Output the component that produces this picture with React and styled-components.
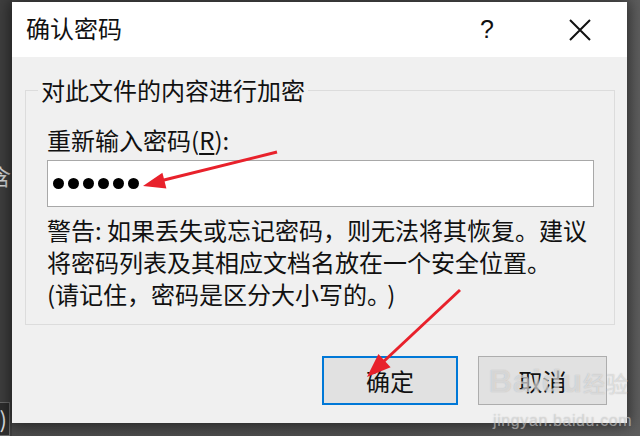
import React from 'react';
import styled, { createGlobalStyle } from 'styled-components';

const GlobalStyle = createGlobalStyle`
  html, body {
    margin: 0;
    padding: 0;
    background: #4e4e4e;
    overflow: hidden;
  }
  * { box-sizing: border-box; }
`;

const UI_FONT = `"Noto Sans CJK SC", "Noto Sans", "Liberation Sans", sans-serif`;

const Desktop = styled.div`
  position: relative;
  width: 640px;
  height: 436px;
  display: flex;
  align-items: flex-start;
  background: linear-gradient(90deg, #4a4a4a 0%, #4f4f4f 60%, #5e5e5e 100%);
  font-family: ${UI_FONT};
  overflow: hidden;
`;

const LeftStrip = styled.div`
  width: 12px;
  height: 436px;
  display: flex;
  flex-direction: column;
  overflow: hidden;
  background: #3f3f3f;
`;

const BackChar = styled.div`
  margin-top: 160px;
  margin-left: -11px;
  font-size: 22px;
  line-height: 30px;
  color: #d8d8d8;
`;

const BackBox = styled.div`
  margin-top: auto;
  height: 34px;
  margin-left: -3px;
  width: 13px;
  border: 1px solid #6a6a6a;
  background: #2e2e2e;
  color: #e0e0e0;
  font-size: 22px;
  line-height: 30px;
  text-align: right;
  padding-right: 2px;
`;

const Dialog = styled.div`
  margin-top: 2px;
  width: 615px;
  height: 421px;
  display: flex;
  flex-direction: column;
  background: #f0f0f0;
  box-shadow: 0 0 14px 2px rgba(0, 0, 0, 0.55);
`;

const TitleBar = styled.div`
  height: 55px;
  display: flex;
  align-items: center;
  padding-left: 14px;
  background: #ffffff;
`;

const Title = styled.div`
  flex: 1;
  font-size: 24px;
  color: #111;
  margin-top: -4px;
`;

const TitleButton = styled.div`
  width: ${(p) => p.$w}px;
  height: 55px;
  display: flex;
  align-items: center;
  justify-content: center;
  color: #111;
  font-size: 25px;
  font-family: "Liberation Sans", "DejaVu Sans", sans-serif;
`;

const Body = styled.div`
  flex: 1;
  display: flex;
  flex-direction: column;
  padding: 19px 12px 0 13px;
`;

const Group = styled.fieldset`
  margin: 0;
  padding: 0 20px 14px 21px;
  border: 1px solid #dcdcdc;
  display: flex;
  flex-direction: column;
`;

const Legend = styled.legend`
  margin-left: -9px;
  padding: 0 3px;
  font-size: 24px;
  line-height: 28px;
  color: #111;
`;

const Label = styled.div`
  margin-top: 22px;
  font-size: 24px;
  line-height: 28px;
  color: #111;

  u {
    text-underline-offset: 3px;
  }
`;

const PasswordBox = styled.div`
  margin-top: 6px;
  height: 47px;
  border: 1px solid #a8a8a8;
  background: #ffffff;
  display: flex;
  align-items: center;
  gap: 4px;
  padding-left: 5px;
`;

const Dot = styled.span`
  width: 11px;
  height: 11px;
  border-radius: 50%;
  background: #000;
`;

const Warning = styled.div`
  margin-top: 7px;
  font-size: 24px;
  line-height: 32px;
  color: #111;
  white-space: nowrap;

  span {
    margin-left: 8px;
  }
`;

const ButtonRow = styled.div`
  margin-top: 31px;
  display: flex;
  justify-content: flex-end;
  gap: 20px;
  padding-right: 8px;
`;

const Button = styled.div`
  width: ${(p) => p.$w}px;
  height: 49px;
  display: flex;
  align-items: center;
  justify-content: center;
  background: #e1e1e1;
  border: ${(p) => (p.$primary ? '2px solid #0078d7' : '1px solid #adadad')};
  font-size: 24px;
  color: #111;
`;

const Overlay = styled.svg`
  position: absolute;
  left: 0;
  top: 0;
  pointer-events: none;
`;

const Watermark = styled.div`
  position: absolute;
  left: 489px;
  top: 362px;
  display: flex;
  flex-direction: column;
  align-items: flex-start;
  color: rgba(255, 255, 255, 0.5);
  text-shadow: 0 0 1px rgba(120, 120, 120, 0.5);
  pointer-events: none;
`;

const MarkLogo = styled.div`
  font-family: "Liberation Sans", sans-serif;
  font-weight: bold;
  font-size: 32px;
  line-height: 38px;
  letter-spacing: 1px;

  span {
    font-family: ${UI_FONT};
    font-weight: normal;
    font-size: 22px;
  }
`;

const MarkUrl = styled.div`
  font-family: "Liberation Sans", sans-serif;
  font-size: 16px;
  line-height: 18px;
  margin-top: 11px;
  margin-left: 4px;
  letter-spacing: 0.6px;
  color: rgba(255, 255, 255, 0.4);
`;

const RED = '#e8212b';

export default function App() {
  return (
    <>
      <GlobalStyle />
      <Desktop>
        <LeftStrip>
          <BackChar>含</BackChar>
          <BackBox>)</BackBox>
        </LeftStrip>
        <Dialog>
          <TitleBar>
            <Title>确认密码</Title>
            <TitleButton $w={92}>?</TitleButton>
            <TitleButton $w={94}>
              <svg width="22" height="22" viewBox="0 0 22 22">
                <path d="M1 1 L21 21 M21 1 L1 21" stroke="#111" strokeWidth="2" fill="none" />
              </svg>
            </TitleButton>
          </TitleBar>
          <Body>
            <Group>
              <Legend>对此文件的内容进行加密</Legend>
              <Label>
                重新输入密码(<u>R</u>):
              </Label>
              <PasswordBox>
                {Array.from({ length: 6 }).map((_, i) => (
                  <Dot key={i} />
                ))}
              </PasswordBox>
              <Warning>
                警告: 如果丢失或忘记密码，则无法将其恢复。建议
                <br />
                将密码列表及其相应文档名放在一个安全位置。
                <br />
                (请记住，密码是区分大小写的。<span>)</span>
              </Warning>
            </Group>
            <ButtonRow>
              <Button $w={136} $primary>确定</Button>
              <Button $w={129}>取消</Button>
            </ButtonRow>
          </Body>
        </Dialog>
        <Watermark>
          <MarkLogo>
            Baidu<span>经验</span>
          </MarkLogo>
          <MarkUrl>jingyan.baidu.com</MarkUrl>
        </Watermark>
        <Overlay width="640" height="436" viewBox="0 0 640 436">
          <line x1="277" y1="152" x2="160" y2="181" stroke={RED} strokeWidth="3" />
          <polygon points="143,186 166.4,188.4 162.4,172.8" fill={RED} />
          <line x1="460" y1="290" x2="382" y2="363" stroke={RED} strokeWidth="3" />
          <polygon points="367,377 390.6,367.2 378.4,354" fill={RED} />
        </Overlay>
      </Desktop>
    </>
  );
}
